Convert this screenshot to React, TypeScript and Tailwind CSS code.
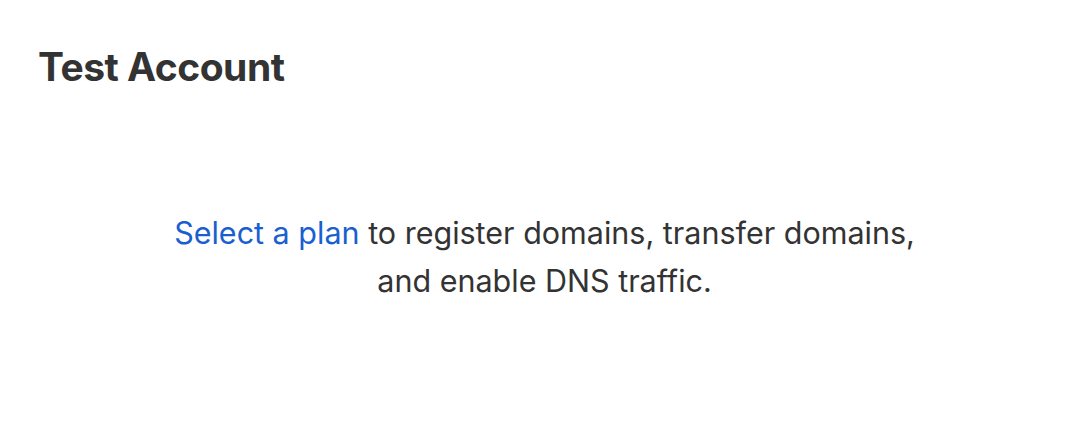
export default function App() {
  return (
    <div className="min-h-[435px] bg-white font-['Inter',sans-serif] text-[#333333]">
      <div className="px-[38px] pt-[43px]">
        <h1 className="text-[39px] font-bold leading-[48px] tracking-[-0.5px]">Test Account</h1>
      </div>
      <div className="pt-[118px] text-center text-[30.5px] leading-[48px]">
        <a href="#" className="text-[#1a5fd0]">
          Select a plan
        </a>{" "}
        to register domains, transfer domains,
        <br />
        and enable DNS traffic.
      </div>
    </div>
  )
}
